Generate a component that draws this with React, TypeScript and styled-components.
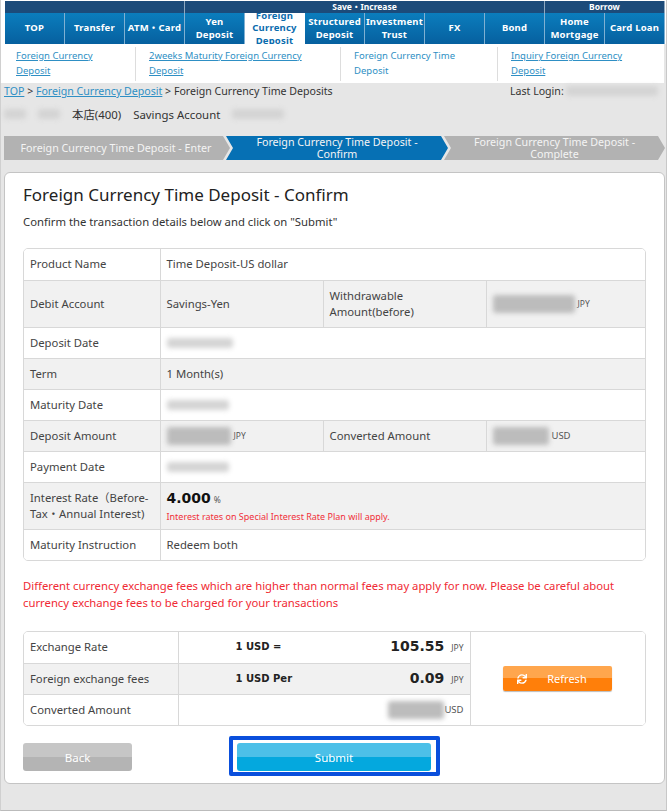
import styled, { createGlobalStyle } from 'styled-components';
import { FaSync } from 'react-icons/fa';

const tabs = [
  'TOP',
  'Transfer',
  'ATM・Card',
  'Yen Deposit',
  'Foreign Currency Deposit',
  'Structured Deposit',
  'Investment Trust',
  'FX',
  'Bond',
  'Home Mortgage',
  'Card Loan',
];

const subLinks = [
  { label: 'Foreign Currency Deposit', width: 135, pad: 15, line: true },
  { label: '2weeks Maturity Foreign Currency Deposit', width: 205, pad: 13, line: true },
  { label: 'Foreign Currency Time Deposit', width: 157, pad: 13, line: false },
  { label: 'Inquiry Foreign Currency Deposit', width: 166, pad: 13, line: true },
];

function App() {
  return (
    <Page>
      <GlobalStyle />
      <Nav>
        <GroupRow>
          <Group $span={3} />
          <Group $span={6}>Save・Increase</Group>
          <Group $span={2}>Borrow</Group>
        </GroupRow>
        <TabRow>
          {tabs.map((tab, i) => (
            <Tab key={tab} $active={i === 4}>
              {tab}
            </Tab>
          ))}
        </TabRow>
      </Nav>

      <SubNav>
        {subLinks.map((link) => (
          <SubItem key={link.label} $width={link.width} $pad={link.pad}>
            <SubLink $underline={link.line}>{link.label}</SubLink>
          </SubItem>
        ))}
      </SubNav>

      <Crumbs>
        <div>
          <Link>TOP</Link> &gt; <Link>Foreign Currency Deposit</Link> &gt; Foreign Currency Time Deposits
        </div>
        <LastLogin>
          Last Login: <Blur $w={92} />
        </LastLogin>
      </Crumbs>

      <AccountRow>
        <Blur $w={22} />
        <Blur $w={22} />
        <span>本店(400)</span>
        <span>Savings Account</span>
        <Blur $w={52} />
      </AccountRow>

      <Steps>
        <Step $width={226} $first>
          Foreign Currency Time Deposit - Enter
        </Step>
        <Step $width={222} $active>
          Foreign Currency Time Deposit -<br />
          Confirm
        </Step>
        <Step $width={221}>
          Foreign Currency Time Deposit -<br />
          Complete
        </Step>
      </Steps>

      <Card>
        <Title>Foreign Currency Time Deposit - Confirm</Title>
        <Lead>Confirm the transaction details below and click on "Submit"</Lead>

        <TableWrap>
          <Table>
            <colgroup>
              <col width={136} />
              <col width={163} />
              <col width={163} />
              <col />
            </colgroup>
            <tbody>
              <Row>
                <Label>Product Name</Label>
                <Cell colSpan={3}>Time Deposit-US dollar</Cell>
              </Row>
              <Row $alt $h={47}>
                <Label>Debit Account</Label>
                <Cell>Savings-Yen</Cell>
                <Label>
                  Withdrawable
                  <br />
                  Amount(before)
                </Label>
                <Cell>
                  <Blur $w={82} $h={18} /> <Unit>JPY</Unit>
                </Cell>
              </Row>
              <Row>
                <Label>Deposit Date</Label>
                <Cell colSpan={3}>
                  <Blur $w={66} />
                </Cell>
              </Row>
              <Row $alt>
                <Label>Term</Label>
                <Cell colSpan={3}>1 Month(s)</Cell>
              </Row>
              <Row>
                <Label>Maturity Date</Label>
                <Cell colSpan={3}>
                  <Blur $w={62} />
                </Cell>
              </Row>
              <Row $alt>
                <Label>Deposit Amount</Label>
                <Cell>
                  <Blur $w={64} $h={18} /> <Unit>JPY</Unit>
                </Cell>
                <Label>Converted Amount</Label>
                <Cell>
                  <Blur $w={56} $h={18} /> <Unit $big>USD</Unit>
                </Cell>
              </Row>
              <Row>
                <Label>Payment Date</Label>
                <Cell colSpan={3}>
                  <Blur $w={62} />
                </Cell>
              </Row>
              <Row $alt $h={47}>
                <Label>
                  Interest Rate（Before-
                  <br />
                  Tax・Annual Interest)
                </Label>
                <Cell colSpan={3}>
                  <RateLine>
                    <Rate>4.000</Rate> <Unit>%</Unit>
                  </RateLine>
                  <RateNote>Interest rates on Special Interest Rate Plan will apply.</RateNote>
                </Cell>
              </Row>
              <Row>
                <Label>Maturity Instruction</Label>
                <Cell colSpan={3}>Redeem both</Cell>
              </Row>
            </tbody>
          </Table>
        </TableWrap>

        <Warning>
          Different currency exchange fees which are higher than normal fees may apply for now. Please be careful about
          currency exchange fees to be charged for your transactions
        </Warning>

        <TableWrap>
          <Table>
            <colgroup>
              <col width={154} />
              <col width={292} />
              <col />
            </colgroup>
            <tbody>
              <Row>
                <Label>Exchange Rate</Label>
                <Label>
                  <AmountLine>
                    <Per>1 USD =</Per>
                    <span>
                      <Amount>105.55</Amount> <Unit>JPY</Unit>
                    </span>
                  </AmountLine>
                </Label>
                <ActionCell rowSpan={3}>
                  <RefreshButton>
                    <FaSync size={10} />
                    <span>Refresh</span>
                  </RefreshButton>
                </ActionCell>
              </Row>
              <Row $alt>
                <Label>Foreign exchange fees</Label>
                <Label>
                  <AmountLine>
                    <Per>1 USD Per</Per>
                    <span>
                      <Amount>0.09</Amount> <Unit>JPY</Unit>
                    </span>
                  </AmountLine>
                </Label>
              </Row>
              <Row>
                <Label>Converted Amount</Label>
                <Label>
                  <AmountLine>
                    <Per />
                    <span>
                      <Blur $w={56} $h={18} />
                      <Unit $big>USD</Unit>
                    </span>
                  </AmountLine>
                </Label>
              </Row>
            </tbody>
          </Table>
        </TableWrap>

        <Actions>
          <BackButton>Back</BackButton>
          <SubmitFrame>
            <SubmitButton>Submit</SubmitButton>
          </SubmitFrame>
        </Actions>
      </Card>
    </Page>
  );
}

export default App;

const GlobalStyle = createGlobalStyle`
  html, body {
    margin: 0;
    padding: 0;
    background: #e6e6e6;
  }
`;

const Page = styled.div`
  box-sizing: border-box;
  width: 667px;
  height: 811px;
  overflow: hidden;
  background: #e6e6e6;
  border-left: 1px solid #d0d0d0;
  border-right: 1px solid #c8c8c8;
  border-bottom: 1px solid #bbb;
  font-family: 'Noto Sans', 'Noto Sans CJK JP', sans-serif;
  font-size: 11.3px;
  color: #333;
`;

const Nav = styled.nav`
  padding: 1px 1px 0 4px;
  background: #fff;
`;

const GroupRow = styled.div`
  display: flex;
  height: 12px;
`;

const Group = styled.div<{ $span: number }>`
  box-sizing: border-box;
  width: ${({ $span }) => $span * 60}px;
  background: #1c4b7a;
  border-right: 1px solid #8fa9c0;
  color: #fff;
  font-size: 8.5px;
  font-weight: 700;
  line-height: 12px;
  text-align: center;
`;

const TabRow = styled.div`
  display: flex;
  height: 31px;
`;

const Tab = styled.div<{ $active?: boolean }>`
  box-sizing: border-box;
  width: 60px;
  display: flex;
  align-items: center;
  justify-content: center;
  overflow: hidden;
  padding: 0 1px;
  background: ${({ $active }) => ($active ? '#fff' : 'linear-gradient(#0b7dbd, #06609f)')};
  border-right: 1px solid ${({ $active }) => ($active ? '#fff' : '#7fb0d2')};
  color: ${({ $active }) => ($active ? '#0a6cae' : '#fff')};
  font-size: 9.5px;
  font-weight: 700;
  line-height: 12.5px;
  letter-spacing: 0.2px;
  text-align: center;
`;

const SubNav = styled.div`
  display: flex;
  height: 39px;
  margin-right: 2px;
  background: #fff;
`;

const SubItem = styled.div<{ $width: number; $pad: number }>`
  box-sizing: border-box;
  width: ${({ $width }) => $width}px;
  height: 34px;
  margin-top: 3px;
  padding: 2px 10px 0 ${({ $pad }) => $pad}px;
  border-right: 1px solid #ddd;
  font-size: 9.5px;
  line-height: 14.5px;

  &:last-child {
    border-right: 0;
  }
`;

const SubLink = styled.a<{ $underline: boolean }>`
  color: #2e8fc4;
  text-decoration: ${({ $underline }) => ($underline ? 'underline' : 'none')};
`;

const Crumbs = styled.div`
  display: flex;
  justify-content: space-between;
  height: 16px;
  padding: 0 0 0 3px;
  font-size: 10.6px;
  line-height: 16px;
  color: #333;
`;

const Link = styled.a`
  color: #2e8fc4;
  text-decoration: underline;
`;

const LastLogin = styled.div`
  display: flex;
  align-items: center;
  gap: 2px;
  width: 156px;
`;

const AccountRow = styled.div`
  display: flex;
  align-items: center;
  gap: 12px;
  height: 18px;
  margin-top: 6px;
  padding-left: 3px;
  font-size: 11.4px;
`;

const Blur = styled.span<{ $w: number; $h?: number }>`
  display: inline-block;
  width: ${({ $w }) => $w}px;
  height: ${({ $h }) => $h ?? 10}px;
  vertical-align: ${({ $h }) => ($h ? '-6px' : 'middle')};
  background: ${({ $h }) => ($h ? '#bcbcbc' : '#d4d4d4')};
  border-radius: 3px;
  filter: blur(2.5px);
`;

const Steps = styled.div`
  display: flex;
  height: 24px;
  margin: 13px 0 12px 3px;
`;

const Step = styled.div<{ $width: number; $active?: boolean; $first?: boolean }>`
  box-sizing: border-box;
  flex: none;
  width: ${({ $width }) => $width}px;
  margin-right: -4px;
  padding: 0 ${({ $first }) => ($first ? '12px' : '10px')} 0 10px;
  display: flex;
  align-items: center;
  justify-content: center;
  background: ${({ $active }) => ($active ? '#0670b4' : '#b2b2b2')};
  clip-path: ${({ $first }) =>
    $first
      ? 'polygon(0 0, calc(100% - 7px) 0, 100% 50%, calc(100% - 7px) 100%, 0 100%)'
      : 'polygon(0 0, calc(100% - 7px) 0, 100% 50%, calc(100% - 7px) 100%, 0 100%, 7px 50%)'};
  color: #f4f4f4;
  font-size: 10.7px;
  line-height: 12px;
  text-align: center;
`;

const Card = styled.main`
  box-sizing: border-box;
  width: 661px;
  height: 612px;
  margin-left: 3px;
  padding: 11px 18px 0;
  background: #fff;
  border: 1px solid #c4c4c4;
  border-radius: 6px;
`;

const Title = styled.h1`
  margin: 0;
  font-size: 17px;
  font-weight: 400;
  line-height: 22px;
  color: #222;
`;

const Lead = styled.p`
  margin: 8px 0 0;
  font-size: 11.3px;
  line-height: 16px;
  color: #333;
`;

const TableWrap = styled.div`
  margin-top: 18px;
  border: 1px solid #d8d8d8;
  border-radius: 5px;
  overflow: hidden;
`;

const Table = styled.table`
  width: 100%;
  table-layout: fixed;
  border-collapse: collapse;
`;

const Row = styled.tr<{ $alt?: boolean; $h?: number }>`
  height: ${({ $h }) => $h ?? 31}px;
  background: ${({ $alt }) => ($alt ? '#f1f1f1' : '#fff')};
  border-bottom: 1px solid #d8d8d8;

  &:last-child {
    border-bottom: 0;
  }
`;

const Label = styled.td`
  padding: 0 6px;
  border-right: 1px solid #d8d8d8;
  font-size: 11.3px;
  line-height: 16px;
  color: #444;
`;

const Cell = styled(Label)`
  &:last-child {
    border-right: 0;
  }
`;

const Unit = styled.span<{ $big?: boolean }>`
  font-size: ${({ $big }) => ($big ? '9.5px' : '8.5px')};
  color: #555;
`;

const RateLine = styled.div`
  line-height: 20px;
`;

const Rate = styled.span`
  font-family: 'DejaVu Sans', sans-serif;
  font-size: 14px;
  font-weight: 700;
  color: #111;
`;

const RateNote = styled.div`
  font-size: 9px;
  line-height: 13px;
  color: #f0303a;
`;

const Warning = styled.p`
  margin: 16px 0 20px;
  font-size: 11.3px;
  line-height: 17px;
  color: #f02a34;
`;

const AmountLine = styled.div`
  display: flex;
  align-items: center;
  justify-content: space-between;
  padding-left: 51px;
  white-space: nowrap;
`;

const Per = styled.b`
  font-family: 'DejaVu Sans', sans-serif;
  font-size: 10px;
  color: #222;
`;

const Amount = styled.b`
  margin-right: 4px;
  font-family: 'DejaVu Sans', sans-serif;
  font-size: 14px;
  color: #222;
`;

const ActionCell = styled.td`
  text-align: center;
  background: #fff;
`;

const RefreshButton = styled.button`
  display: inline-flex;
  align-items: center;
  box-sizing: border-box;
  width: 109px;
  height: 25px;
  gap: 20px;
  padding: 0 0 0 14px;
  border: 0;
  border-radius: 2px;
  background: linear-gradient(#ffa64d 0 50%, #ff7f0a 50% 100%);
  box-shadow: 0 1px 1px #bbb;
  color: #fff;
  font-family: inherit;
  font-size: 11px;
`;

const Actions = styled.div`
  display: flex;
  align-items: center;
  margin-top: 10px;
`;

const BaseButton = styled.button`
  box-sizing: border-box;
  height: 28px;
  border: 0;
  border-radius: 3px;
  color: #fff;
  font-family: inherit;
  font-size: 11.5px;
`;

const BackButton = styled(BaseButton)`
  width: 109px;
  margin-top: 2px;
  background: linear-gradient(#c6c6c6 0 50%, #b4b4b4 50% 100%);
`;

const SubmitFrame = styled.div`
  box-sizing: border-box;
  flex: none;
  width: 211px;
  height: 40px;
  margin-left: 97px;
  padding: 3px 5px 1px 4px;
  background: #fff;
  border: 4px solid #0a4fdc;
  border-radius: 2px;
`;

const SubmitButton = styled(BaseButton)`
  display: block;
  width: 100%;
  background: linear-gradient(#4cc0e8 0 50%, #04a8de 50% 100%);
`;
